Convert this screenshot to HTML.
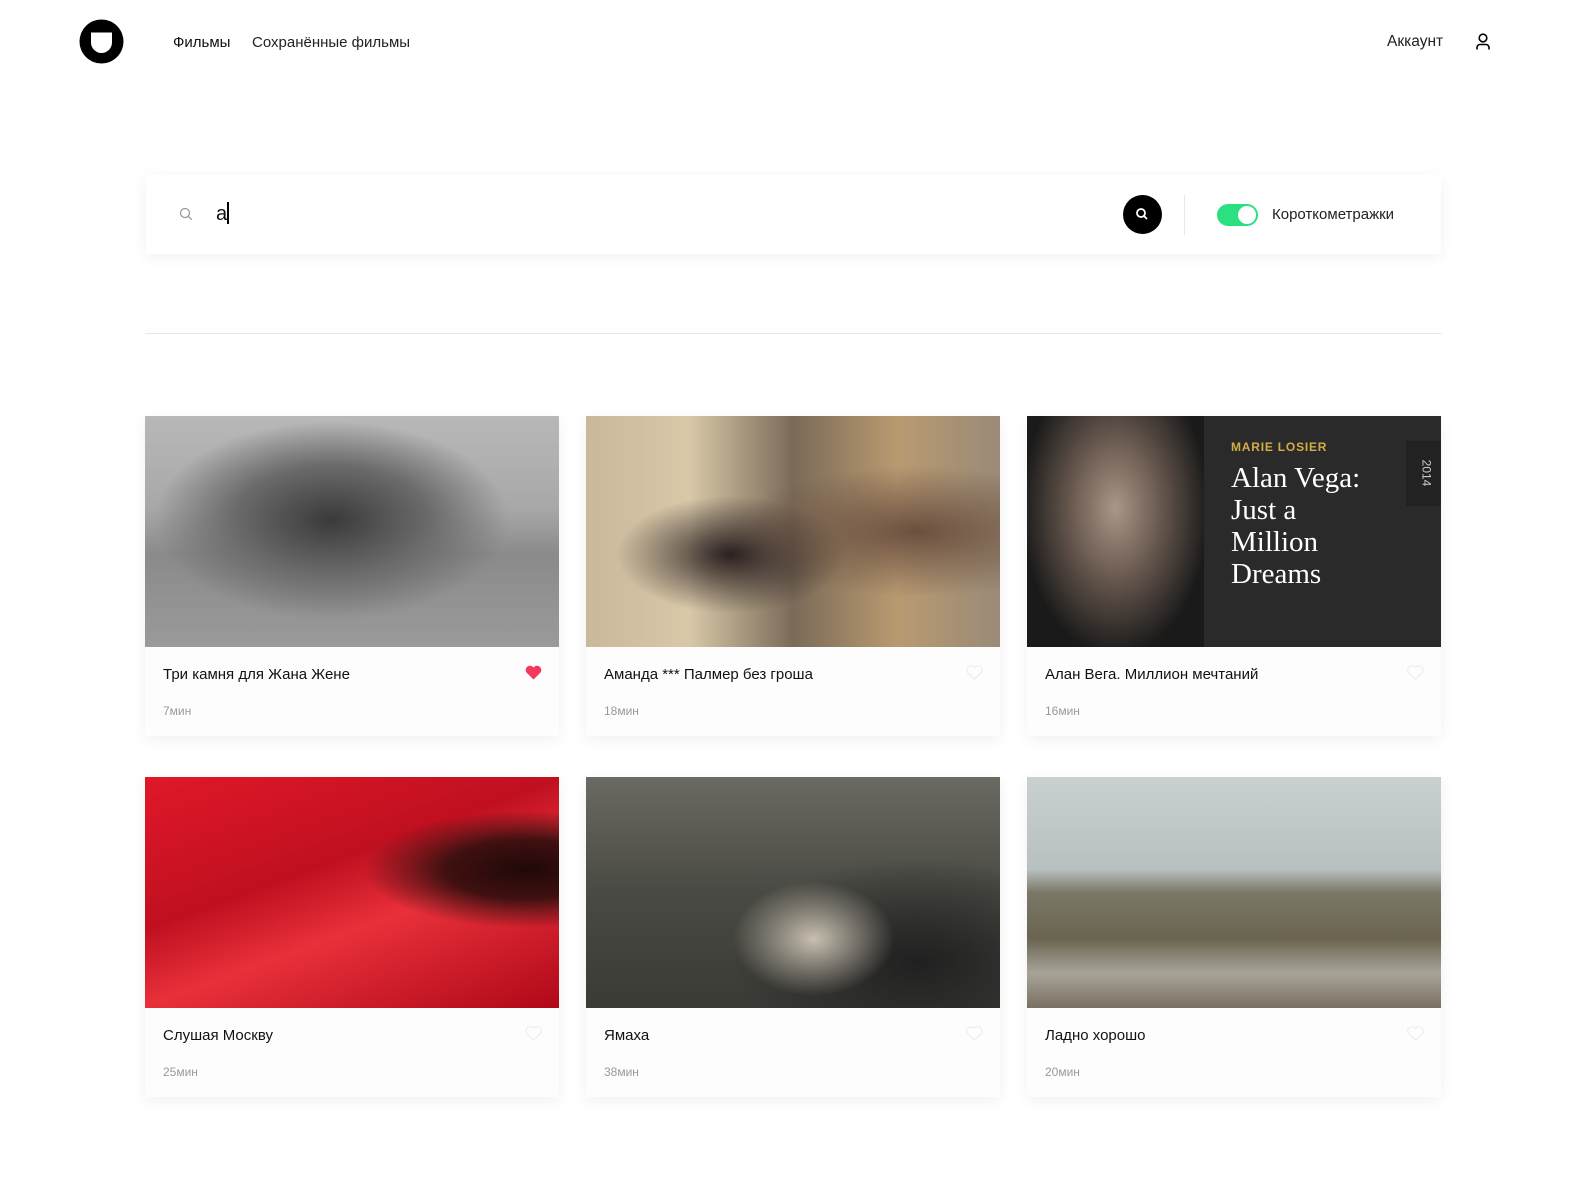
<!DOCTYPE html>
<html><head><meta charset="utf-8"><style>
*{margin:0;padding:0;box-sizing:border-box}
body{width:1583px;height:1187px;background:#fff;font-family:"Liberation Sans",sans-serif;color:#000;position:relative;overflow:hidden}
.abs{position:absolute}
.nav{font-size:15px}
.card{position:absolute;width:414px;height:320px;background:#fdfdfd;box-shadow:0 4px 14px rgba(0,0,0,0.06)}
.card .img{position:absolute;left:0;top:0;width:414px;height:231px;overflow:hidden}
.card .t{position:absolute;left:18px;top:250px;font-size:15px;color:#111}
.card .d{position:absolute;left:18px;top:288px;font-size:12px;color:#999}
.card svg.h{position:absolute;right:17px;top:249px}
</style></head><body>
<svg class="abs" style="left:79px;top:19px" width="45" height="45" viewBox="0 0 45 45"><circle cx="22.5" cy="22.5" r="22" fill="#000"/><path d="M12 13.5h21v10a10.5 10.5 0 0 1-21 0z" fill="#fff"/></svg>
<div class="abs nav" style="left:173px;top:34px;color:#111">Фильмы</div>
<div class="abs nav" style="left:252px;top:34px;color:#222">Сохранённые фильмы</div>
<div class="abs nav" style="left:1387px;top:33px;color:#222;font-size:15.5px">Аккаунт</div>
<svg class="abs" style="left:1475px;top:33px" width="16" height="17" viewBox="0 0 16 17"><circle cx="8" cy="5" r="3.8" fill="none" stroke="#000" stroke-width="1.6"/><path d="M2 16.5v-2a3 3 0 0 1 3-3h6a3 3 0 0 1 3 3v2" fill="none" stroke="#000" stroke-width="1.6"/></svg>

<div class="abs" style="left:146px;top:175px;width:1295px;height:79px;background:#fff;box-shadow:0 3px 14px rgba(0,0,0,0.06)"></div>
<svg class="abs" style="left:179px;top:207px" width="14" height="14" viewBox="0 0 14 14"><circle cx="6" cy="6" r="4.5" fill="none" stroke="#999" stroke-width="1.3"/><path d="M9.3 9.3l3.5 3.5" stroke="#999" stroke-width="1.3"/></svg>
<div class="abs" style="left:216px;top:202px;font-size:20px;color:#111">a<span style="display:inline-block;width:1.5px;height:22px;background:#000;vertical-align:-4px"></span></div>
<div class="abs" style="left:1123px;top:195px;width:39px;height:39px;border-radius:50%;background:#000"></div>
<svg class="abs" style="left:1135px;top:207px" width="14" height="14" viewBox="0 0 14 14"><circle cx="6" cy="6" r="4" fill="none" stroke="#fff" stroke-width="1.8"/><path d="M9 9l3 3" stroke="#fff" stroke-width="1.8"/></svg>
<div class="abs" style="left:1184px;top:195px;width:1px;height:40px;background:#e8e8e8"></div>
<div class="abs" style="left:1217px;top:204px;width:41px;height:22px;border-radius:11px;background:#2be080"></div>
<div class="abs" style="left:1238px;top:206px;width:18px;height:18px;border-radius:50%;background:#fff"></div>
<div class="abs" style="left:1272px;top:206px;font-size:15px;color:#222">Короткометражки</div>

<div class="abs" style="left:145px;top:333px;width:1297px;height:1px;background:#e8e8e8"></div>

<div class="card" style="left:145px;top:416px"><div class="img" style="background:radial-gradient(ellipse at 45% 45%,#3a3a3a 0,#6a6a6a 30%,transparent 55%),linear-gradient(180deg,#b8b8b8 0,#a8a8a8 40%,#8a8a8a 60%,#9a9a9a 100%)"></div><div class="t">Три камня для Жана Жене</div><div class="d">7мин</div><svg class="h" width="17" height="15" viewBox="0 0 17 15"><path d="M8.5 14.5L1.5 7.5A4 4 0 0 1 8.5 2.5A4 4 0 0 1 15.5 7.5z" fill="#f2385c"/></svg></div>
<div class="card" style="left:586px;top:416px"><div class="img" style="background:radial-gradient(ellipse at 80% 50%,#6b5040 0,transparent 40%),radial-gradient(ellipse at 35% 60%,#2a2020 0,transparent 30%),linear-gradient(90deg,#c9b89a 0,#d8c8a8 25%,#7a6a58 50%,#b89a70 75%,#9a8a78 100%)"></div><div class="t">Аманда *** Палмер без гроша</div><div class="d">18мин</div><svg class="h" width="17" height="15" viewBox="0 0 17 15"><path d="M8.5 14L1.5 7.5A4 4 0 0 1 8.5 2.5A4 4 0 0 1 15.5 7.5z" fill="none" stroke="#eee" stroke-width="1.2"/></svg></div>
<div class="card" style="left:1027px;top:416px"><div class="img" style="background:#2a2a2a"><div class="abs" style="left:0;top:0;width:177px;height:231px;background:radial-gradient(ellipse at 50% 40%,#a89888 0,#6a5a50 35%,#1a1a1a 75%)"></div><div class="abs" style="left:204px;top:24px;font-size:12px;font-weight:bold;color:#d4ad45;letter-spacing:0.8px">MARIE LOSIER</div><div class="abs" style="left:204px;top:46px;font-family:'Liberation Serif',serif;font-size:29px;line-height:32px;color:#fff">Alan Vega:<br>Just a<br>Million<br>Dreams</div><div class="abs" style="left:379px;top:25px;width:35px;height:65px;background:#222"></div><div class="abs" style="left:386px;top:50px;font-size:12px;color:#ccc;transform:rotate(90deg)">2014</div></div><div class="t">Алан Вега. Миллион мечтаний</div><div class="d">16мин</div><svg class="h" width="17" height="15" viewBox="0 0 17 15"><path d="M8.5 14L1.5 7.5A4 4 0 0 1 8.5 2.5A4 4 0 0 1 15.5 7.5z" fill="none" stroke="#eee" stroke-width="1.2"/></svg></div>

<div class="card" style="left:145px;top:777px"><div class="img" style="background:radial-gradient(ellipse at 92% 40%,#200808 0,#401010 15%,transparent 30%),linear-gradient(160deg,#e01828 0,#c01020 40%,#e8303a 60%,#b00818 100%)"></div><div class="t">Слушая Москву</div><div class="d">25мин</div><svg class="h" width="17" height="15" viewBox="0 0 17 15"><path d="M8.5 14L1.5 7.5A4 4 0 0 1 8.5 2.5A4 4 0 0 1 15.5 7.5z" fill="none" stroke="#eee" stroke-width="1.2"/></svg></div>
<div class="card" style="left:586px;top:777px"><div class="img" style="background:radial-gradient(ellipse at 55% 70%,#c8c0b0 0,transparent 25%),radial-gradient(ellipse at 80% 80%,#202020 0,transparent 40%),linear-gradient(180deg,#6a6a62 0,#4a4a44 50%,#3a3a36 100%)"></div><div class="t">Ямаха</div><div class="d">38мин</div><svg class="h" width="17" height="15" viewBox="0 0 17 15"><path d="M8.5 14L1.5 7.5A4 4 0 0 1 8.5 2.5A4 4 0 0 1 15.5 7.5z" fill="none" stroke="#eee" stroke-width="1.2"/></svg></div>
<div class="card" style="left:1027px;top:777px"><div class="img" style="background:linear-gradient(180deg,#c8d0d0 0,#b8c0c0 40%,#7a7868 50%,#6a6450 70%,#a8a49a 85%,#7a7060 100%)"></div><div class="t">Ладно хорошо</div><div class="d">20мин</div><svg class="h" width="17" height="15" viewBox="0 0 17 15"><path d="M8.5 14L1.5 7.5A4 4 0 0 1 8.5 2.5A4 4 0 0 1 15.5 7.5z" fill="none" stroke="#eee" stroke-width="1.2"/></svg></div>
</body></html>
